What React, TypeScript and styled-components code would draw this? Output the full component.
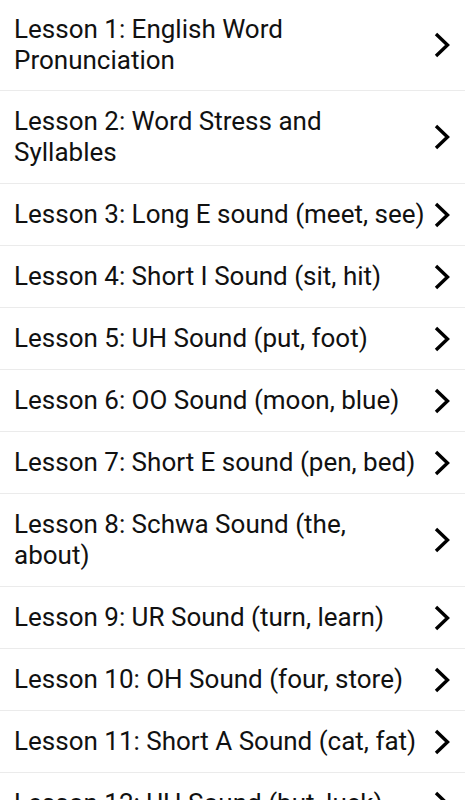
import React from "react";
import styled, { createGlobalStyle } from "styled-components";

const GlobalStyle = createGlobalStyle`
  body {
    margin: 0;
    background: #ffffff;
    font-family: Roboto, "Noto Sans", sans-serif;
  }
`;

const List = styled.div`
  display: flex;
  flex-direction: column;
  background: #ffffff;
`;

const Row = styled.div`
  display: flex;
  align-items: center;
  justify-content: space-between;
  padding: 15px 15px 15px 14px;
  border-bottom: 1px solid #ebebeb;
  cursor: pointer;

  &:first-child {
    padding-top: 14px;
    padding-bottom: 14px;
  }
`;

const Title = styled.div`
  flex: 1;
  font-size: 26px;
  line-height: 31px;
  color: #111111;
  padding-right: 8px;
`;

const Chevron = styled.svg`
  flex-shrink: 0;
  width: 16px;
  height: 26px;
`;

const lessons = [
  "Lesson 1: English Word Pronunciation",
  "Lesson 2: Word Stress and Syllables",
  "Lesson 3: Long E sound (meet, see)",
  "Lesson 4: Short I Sound (sit, hit)",
  "Lesson 5: UH Sound (put, foot)",
  "Lesson 6: OO Sound (moon, blue)",
  "Lesson 7: Short E sound (pen, bed)",
  "Lesson 8: Schwa Sound (the, about)",
  "Lesson 9: UR Sound (turn, learn)",
  "Lesson 10: OH Sound (four, store)",
  "Lesson 11: Short A Sound (cat, fat)",
  "Lesson 12: UH Sound (but, luck)",
  "Lesson 13: AH Sound (hot, father)",
];

function App() {
  return (
    <>
      <GlobalStyle />
      <List>
        {lessons.map((title) => (
          <Row key={title}>
            <Title>{title}</Title>
            <Chevron viewBox="0 0 16 26">
              <polyline
                points="2,2 13.5,13 2,24"
                fill="none"
                stroke="#000"
                strokeWidth="3.4"
              />
            </Chevron>
          </Row>
        ))}
      </List>
    </>
  );
}

export default App;
